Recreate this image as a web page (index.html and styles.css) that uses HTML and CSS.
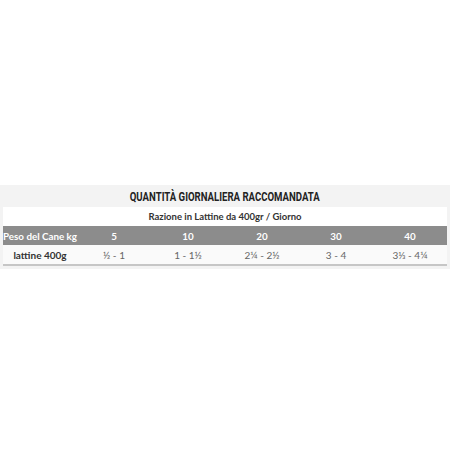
FILE: index.html
```html
<!DOCTYPE html>
<html>
<head>
<meta charset="utf-8">
<link rel="stylesheet" href="styles.css">
</head>
<body>
<div class="band">
  <h2 class="title"><span class="title-text">QUANTITÀ GIORNALIERA RACCOMANDATA</span></h2>
  <table class="feed">
    <tr class="sub"><td colspan="6">Razione in Lattine da 400gr / Giorno</td></tr>
    <tr class="head">
      <td>Peso del Cane kg</td><td>5</td><td>10</td><td>20</td><td>30</td><td>40</td>
    </tr>
    <tr class="data">
      <td class="label">lattine 400g</td><td>½ - 1</td><td>1 - 1½</td><td>2¼ - 2½</td><td>3 - 4</td><td>3⅓ - 4¼</td>
    </tr>
  </table>
</div>
</body>
</html>
```

FILE: styles.css
```css
html, body {
  margin: 0;
  padding: 0;
  background: #ffffff;
}
body {
  font-family: "Lato", "Open Sans", sans-serif;
}
.band {
  margin-top: 185px;
  background: #f3f3f3;
  padding: 2px 3px 3px 3px;
}
.title {
  margin: 0;
  height: 20px;
  line-height: 20px;
  text-align: center;
  font-family: "Roboto", sans-serif;
  font-weight: bold;
  font-size: 12px;
  color: #222;
}
.title-text {
  display: inline-block;
  transform: scaleX(0.8);
}
.feed {
  width: 100%;
  border-collapse: collapse;
  table-layout: fixed;
  border-bottom: 2px solid #c6c6c6;
}
.feed td {
  padding: 0;
  text-align: center;
  font-size: 9.5px;
  white-space: nowrap;
}
.sub td {
  background: #ffffff;
  height: 19px;
  font-weight: bold;
  color: #333;
}
.head td {
  background: #8c8c8c;
  color: #ffffff;
  font-weight: bold;
  height: 19px;
  font-size: 9.8px;
}
.data td {
  background: #fafafa;
  color: #666;
  height: 19px;
  font-size: 10px;
}
.data td.label {
  color: #333;
  font-weight: bold;
}
```
